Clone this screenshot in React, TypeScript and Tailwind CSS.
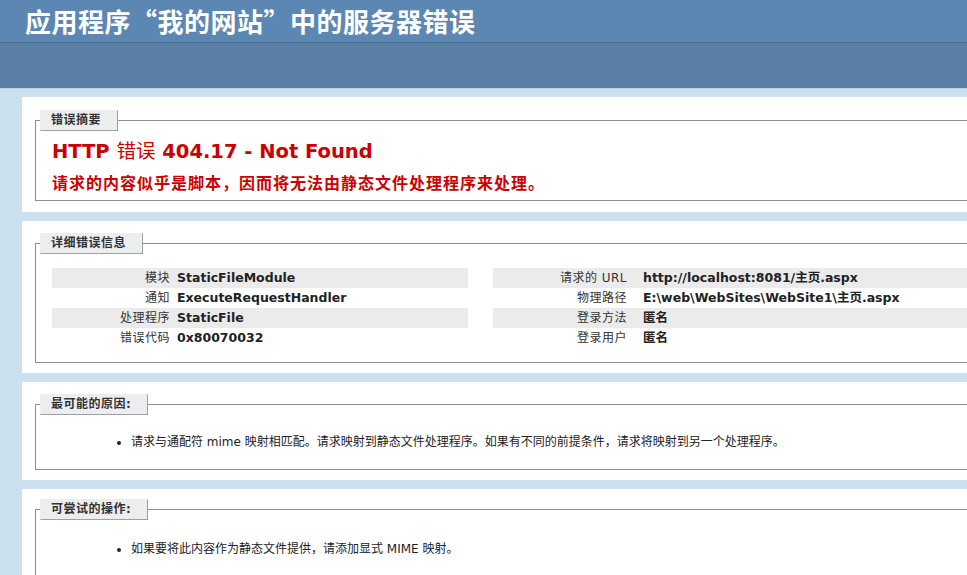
import type { ReactNode } from 'react';

const font = "font-['DejaVu_Sans','Noto_Sans_CJK_SC',sans-serif]";

const leftRows = [
  ['模块', 'StaticFileModule'],
  ['通知', 'ExecuteRequestHandler'],
  ['处理程序', 'StaticFile'],
  ['错误代码', '0x80070032'],
];

const rightRows = [
  ['请求的 URL', 'http://localhost:8081/主页.aspx'],
  ['物理路径', 'E:\\web\\WebSites\\WebSite1\\主页.aspx'],
  ['登录方法', '匿名'],
  ['登录用户', '匿名'],
];

function Section({ title, children, pt = 'pt-[12px]', pb = 'pb-[10px]' }: { title: string; children: ReactNode; pt?: string; pb?: string }) {
  return (
    <div className={`ml-[22px] bg-white ${pt} ${pb}`}>
      <fieldset className="m-0 ml-[13px] min-w-0 border border-r-0 border-[#8f8f8f] p-0">
        <legend className="ml-[4px] h-[21px] border-t border-l border-r border-b border-t-[#ededed] border-l-[#ededed] border-r-[#a0a0a0] border-b-[#a0a0a0] bg-[#ebedef] pl-[10px] pr-[16px] text-[12px] leading-[19px] font-bold tracking-[0.5px] text-[#333]">
          {title}
        </legend>
        <div className="pl-[16px]">{children}</div>
      </fieldset>
    </div>
  );
}

function DetailTable({ rows, labelWidth, labelPad, className }: { rows: string[][]; labelWidth: string; labelPad: string; className: string }) {
  return (
    <table className={`border-collapse ${className}`}>
      <tbody>
        {rows.map(([label, value], i) => (
          <tr key={label} className={i % 2 === 0 ? 'bg-[#ebebeb]' : ''}>
            <th className={`${labelWidth} ${labelPad} h-[20px] p-0 text-right align-middle text-[12px] font-normal tracking-[0.5px] text-[#333]`}>
              {label}
            </th>
            <td className="h-[20px] p-0 align-middle text-[12.5px] font-bold whitespace-nowrap text-[#222]">{value}</td>
          </tr>
        ))}
      </tbody>
    </table>
  );
}

export default function App() {
  return (
    <div className={`min-h-screen overflow-hidden bg-[#cbe1ef] ${font}`}>
      {/* header */}
      <div className="h-[42px] bg-[#5c87b2] pl-[25px]">
        <h1 className="font-['Noto_Sans_CJK_SC',serif] text-[26px] leading-[42px] font-bold tracking-[0.5px] text-white">
          应用程序“我的网站”中的服务器错误
        </h1>
      </div>
      <div className="h-[47px] border-t border-b border-t-[#4a6c8e] border-b-[#c1cfdd] bg-[#5a7fa5]" />

      <div className="flex flex-col gap-[9px] pt-[8px]">
        {/* summary */}
        <Section title="错误摘要" pt="pt-[13px]" pb="pb-[11px]">
          <h2 className="mt-[9px] text-[19.5px] leading-[23px] font-bold text-[#c00]">
            HTTP <span className="font-normal">错误</span> 404.17 - Not Found
          </h2>
          <h3 className="mt-[10px] mb-[6px] text-[16px] leading-[21px] font-bold tracking-[1px] text-[#c00]">
            请求的内容似乎是脚本，因而将无法由静态文件处理程序来处理。
          </h3>
        </Section>

        {/* details */}
        <Section title="详细错误信息">
          <div className="mt-[14px] mb-[14px] flex gap-[25px]">
            <DetailTable rows={leftRows} labelWidth="w-[125px]" labelPad="pr-[7px]" className="w-[416px]" />
            <DetailTable rows={rightRows} labelWidth="w-[150px]" labelPad="pr-[16px]" className="flex-1" />
          </div>
        </Section>

        {/* causes */}
        <Section title="最可能的原因:">
          <ul className="mt-[18px] mb-[18px] list-disc pl-[79px] text-[12px] leading-[18px] text-[#222]">
            <li>请求与通配符 mime 映射相匹配。请求映射到静态文件处理程序。如果有不同的前提条件，请求将映射到另一个处理程序。</li>
          </ul>
        </Section>

        {/* things to try */}
        <Section title="可尝试的操作:" pt="pt-[10px]">
          <ul className="mt-[20px] mb-[18px] list-disc pl-[79px] text-[12px] leading-[18px] text-[#222]">
            <li>如果要将此内容作为静态文件提供，请添加显式 MIME 映射。</li>
          </ul>
        </Section>
      </div>
    </div>
  );
}
